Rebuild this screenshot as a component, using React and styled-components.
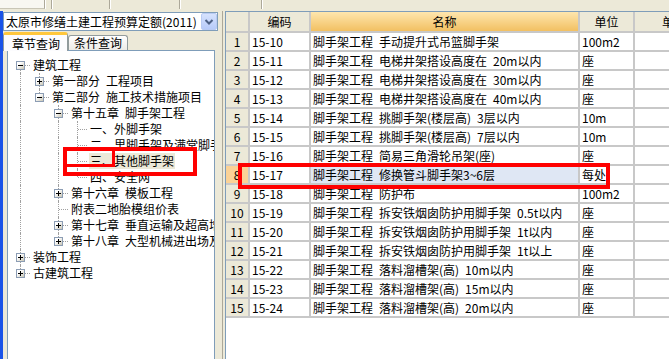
import React from "react";
import styled, { createGlobalStyle } from "styled-components";

const GlobalStyle = createGlobalStyle`
  html, body {
    margin: 0;
    padding: 0;
    background: #ece9d8;
  }
  body {
    font-family: "Noto Sans CJK SC", "Noto Sans", sans-serif;
    font-size: 12px;
    color: #000;
  }
`;

const Window = styled.div`
  position: relative;
  width: 669px;
  height: 359px;
  overflow: hidden;
  display: flex;
  flex-direction: column;
  background: #ece9d8;
`;

const ToolStrip = styled.div`
  height: 11px;
  flex-shrink: 0;
  display: flex;
`;

const ToolSeg = styled.div`
  width: ${(p) => p.$w}px;
  height: 9px;
  box-sizing: border-box;
  border-right: 1px solid #aca899;
  box-shadow: 1px 0 0 #fff;
  background: ${(p) => (p.$light ? "#f8f7f1" : "transparent")};
  border-bottom: ${(p) => (p.$light ? "1px solid #c9c6b6" : "none")};
`;

const Main = styled.div`
  flex: 1;
  min-height: 0;
  display: flex;
`;

const LeftPane = styled.div`
  width: 215px;
  flex-shrink: 0;
  padding-top: 1px;
  display: flex;
  flex-direction: column;
  border-left: 3px solid #1a53e8;
`;

const Combo = styled.div`
  width: 215px;
  height: 19px;
  box-sizing: border-box;
  border: 1px solid #7f9db9;
  background: #fff;
  display: flex;
  align-items: center;
  padding-left: 2px;
`;

const ComboText = styled.span`
  flex: 1;
  line-height: 17px;
  white-space: nowrap;
  overflow: hidden;
`;

const ComboButton = styled.div`
  width: 16px;
  height: 17px;
  box-sizing: border-box;
  border: 1px solid #b9cbf3;
  border-radius: 2px;
  background: linear-gradient(#d6e2fd, #b7cbf9);
  display: flex;
  align-items: center;
  justify-content: center;
`;

const TabRow = styled.div`
  margin-top: 1px;
  height: 18px;
  display: flex;
  align-items: flex-end;
  position: relative;
  z-index: 1;
`;

const Tab = styled.div`
  box-sizing: border-box;
  height: ${(p) => (p.$active ? 19 : 15)}px;
  margin-bottom: ${(p) => (p.$active ? -1 : 0)}px;
  padding: ${(p) => (p.$active ? "2px 7px 0 8px" : "0 5px")};
  border: 1px solid #919b9c;
  border-bottom: none;
  border-top: ${(p) => (p.$active ? "3px solid #ffc73c" : "1px solid #919b9c")};
  border-radius: 3px 3px 0 0;
  background: ${(p) =>
    p.$active ? "#fcfcfe" : "linear-gradient(#ffffff, #ecebe6)"};
  line-height: ${(p) => (p.$active ? 14 : 14)}px;
  white-space: nowrap;
`;

const TreeBox = styled.div`
  margin-left: 4px;
  width: 208px;
  flex: 1;
  box-sizing: border-box;
  border: 1px solid #7f9db9;
  border-bottom: none;
  background: #fff;
  padding: 6px 0 0 3px;
  overflow: hidden;
`;

const TreeRow = styled.div`
  height: 16px;
  display: flex;
  align-items: center;
  white-space: nowrap;
`;

const Guide = styled.div`
  position: relative;
  width: 19px;
  height: 16px;
  flex-shrink: 0;
  &::before {
    content: "";
    display: ${(p) => (p.$v === "none" ? "none" : "block")};
    position: absolute;
    left: 9px;
    top: ${(p) => (p.$v === "bottom" ? 8 : 0)}px;
    bottom: ${(p) => (p.$v === "top" ? 8 : 0)}px;
    border-left: 1px dotted #a0a0a0;
  }
  &::after {
    content: "";
    display: ${(p) => (p.$h ? "block" : "none")};
    position: absolute;
    left: 10px;
    top: 8px;
    width: 9px;
    border-top: 1px dotted #a0a0a0;
  }
`;

const Expander = styled.div`
  position: absolute;
  z-index: 1;
  left: 5px;
  top: 4px;
  width: 9px;
  height: 9px;
  box-sizing: border-box;
  border: 1px solid #8c9db4;
  background: linear-gradient(135deg, #ffffff 30%, #c8c5b4);
  &::before {
    content: "";
    position: absolute;
    left: 1px;
    top: 3px;
    width: 5px;
    height: 1px;
    background: #000;
  }
  &::after {
    content: "";
    display: ${(p) => (p.$open ? "none" : "block")};
    position: absolute;
    left: 3px;
    top: 1px;
    width: 1px;
    height: 5px;
    background: #000;
  }
`;

const Label = styled.span`
  margin-left: 2px;
  padding: 0 1px;
  height: 16px;
  line-height: 16px;
  background: ${(p) => (p.$selected ? "#ece9d8" : "transparent")};
`;

const Splitter = styled.div`
  width: 7px;
  flex-shrink: 0;
  box-sizing: border-box;
  border-left: 4px solid #ece9d8;
  border-right: 2px solid #ece9d8;
  background: #aca899;
`;

const RightPane = styled.div`
  flex: 1;
  min-width: 0;
  border-left: 1px solid #7f9db9;
  border-top: 1px solid #7f9db9;
  background: #fff;
  overflow: hidden;
`;

const COLS = "24px 61px 269px 55px 80px";

const GridRow = styled.div`
  display: grid;
  grid-template-columns: ${COLS};
  height: ${(p) => p.$h}px;
  width: 489px;
`;

const Cell = styled.div`
  box-sizing: border-box;
  border-right: 2px solid #c8c8c8;
  border-bottom: 2px solid #c8c8c8;
  background: ${(p) => p.$bg || "#fff"};
  text-align: ${(p) => p.$align || "left"};
  padding-left: ${(p) => (p.$align === "center" ? 0 : 2)}px;
  line-height: ${(p) => p.$lh || 17}px;
  white-space: pre;
  overflow: hidden;
`;

const HeadCell = styled(Cell)`
  text-align: center;
  padding-left: 0;
  line-height: 19px;
  background: ${(p) =>
    p.$hot ? "linear-gradient(#fee6ae, #f2c062)" : "#ece9d8"};
`;

const Mark = styled.div`
  position: absolute;
  left: ${(p) => p.$x}px;
  top: ${(p) => p.$y}px;
  width: ${(p) => p.$w}px;
  height: ${(p) => p.$h}px;
  box-sizing: border-box;
  border: ${(p) => p.$t}px solid #ff0000;
  pointer-events: none;
`;

const S = "\u2002";

const tree = [
  {
    label: "建筑工程",
    open: true,
    children: [
      { label: `第一部分${S}工程项目`, children: [] },
      {
        label: `第二部分${S}施工技术措施项目`,
        open: true,
        children: [
          {
            label: `第十五章${S}脚手架工程`,
            open: true,
            children: [
              { label: "一、外脚手架" },
              { label: "二、里脚手架及满堂脚手架" },
              { label: "三、其他脚手架", selected: true },
              { label: "四、安全网" },
            ],
          },
          { label: `第十六章${S}模板工程`, children: [] },
          { label: "附表二地胎模组价表" },
          { label: `第十七章${S}垂直运输及超高增加费`, children: [] },
          { label: `第十八章${S}大型机械进出场及安拆费`, children: [] },
        ],
      },
    ],
  },
  { label: "装饰工程", children: [] },
  { label: "古建筑工程", children: [] },
];

function flatten(nodes, level, trail, out) {
  nodes.forEach((n, i) => {
    const last = i === nodes.length - 1;
    const first = level === 0 && i === 0;
    out.push({ ...n, level, trail, last, first });
    if (n.open && n.children) flatten(n.children, level + 1, [...trail, !last], out);
  });
  return out;
}

const rows = [
  ["15-10", `脚手架工程${S}手动提升式吊篮脚手架`, "100m2"],
  ["15-11", `脚手架工程${S}电梯井架搭设高度在${S}20m以内`, "座"],
  ["15-12", `脚手架工程${S}电梯井架搭设高度在${S}30m以内`, "座"],
  ["15-13", `脚手架工程${S}电梯井架搭设高度在${S}40m以内`, "座"],
  ["15-14", `脚手架工程${S}挑脚手架(楼层高)${S}3层以内`, "10m"],
  ["15-15", `脚手架工程${S}挑脚手架(楼层高)${S}7层以内`, "10m"],
  ["15-16", `脚手架工程${S}简易三角滑轮吊架(座)`, "座"],
  ["15-17", `脚手架工程${S}修换管斗脚手架3~6层`, "每处"],
  ["15-18", `脚手架工程${S}防护布`, "100m2"],
  ["15-19", `脚手架工程${S}拆安铁烟囱防护用脚手架${S}0.5t以内`, "座"],
  ["15-20", `脚手架工程${S}拆安铁烟囱防护用脚手架${S}1t以内`, "座"],
  ["15-21", `脚手架工程${S}拆安铁烟囱防护用脚手架${S}1t以上`, "座"],
  ["15-22", `脚手架工程${S}落料溜槽架(高)${S}10m以内`, "座"],
  ["15-23", `脚手架工程${S}落料溜槽架(高)${S}15m以内`, "座"],
  ["15-24", `脚手架工程${S}落料溜槽架(高)${S}20m以内`, "座"],
];

const SELECTED = 8;

function TreeLine({ node }) {
  const guides = node.trail.map((cont, k) => (
    <Guide key={k} $v={cont ? "full" : "none"} />
  ));
  let v = "full";
  if (node.first) v = node.last ? "none" : "bottom";
  else if (node.last) v = "top";
  return (
    <TreeRow>
      {guides}
      <Guide $v={v} $h>
        {node.children && <Expander $open={node.open} />}
      </Guide>
      <Label $selected={node.selected}>{node.label}</Label>
    </TreeRow>
  );
}

export default function App() {
  const flat = flatten(tree, 0, [], []);
  return (
    <Window>
      <GlobalStyle />
      <ToolStrip>
        <ToolSeg $w={45} $light />
        <ToolSeg $w={7} />
        <ToolSeg $w={58} />
        <ToolSeg $w={70} />
        <ToolSeg $w={82} />
      </ToolStrip>
      <Main>
        <LeftPane>
          <Combo>
            <ComboText>太原市修缮土建工程预算定额(2011)</ComboText>
            <ComboButton>
              <svg width="10" height="8" viewBox="0 0 10 8">
                <path d="M1.5 2 L5 5.5 L8.5 2" fill="none" stroke="#4d6185" strokeWidth="2" />
              </svg>
            </ComboButton>
          </Combo>
          <TabRow>
            <Tab $active>章节查询</Tab>
            <Tab>条件查询</Tab>
          </TabRow>
          <TreeBox>
            {flat.map((n, i) => (
              <TreeLine key={i} node={n} />
            ))}
          </TreeBox>
        </LeftPane>
        <Splitter />
        <RightPane>
          <GridRow $h={21}>
            <HeadCell />
            <HeadCell>编码</HeadCell>
            <HeadCell $hot>名称</HeadCell>
            <HeadCell>单位</HeadCell>
            <HeadCell>单价</HeadCell>
          </GridRow>
          {rows.map(([code, name, unit], i) => {
            const n = i + 1;
            const sel = n === SELECTED;
            return (
              <GridRow key={code} $h={19}>
                <Cell $align="center" $bg={sel ? "#fbd296" : "#ece9d8"}>
                  {n}
                </Cell>
                <Cell>{code}</Cell>
                <Cell $bg={sel ? "#dfe7f4" : "#fff"}>{name}</Cell>
                <Cell>{unit}</Cell>
                <Cell />
              </GridRow>
            );
          })}
        </RightPane>
      </Main>
      <Mark $x={63} $y={147} $w={134} $h={29} $t={4} />
      <Mark $x={63} $y={147} $w={52} $h={20} $t={3} />
      <Mark $x={238} $y={163} $w={372} $h={26} $t={4} />
    </Window>
  );
}
